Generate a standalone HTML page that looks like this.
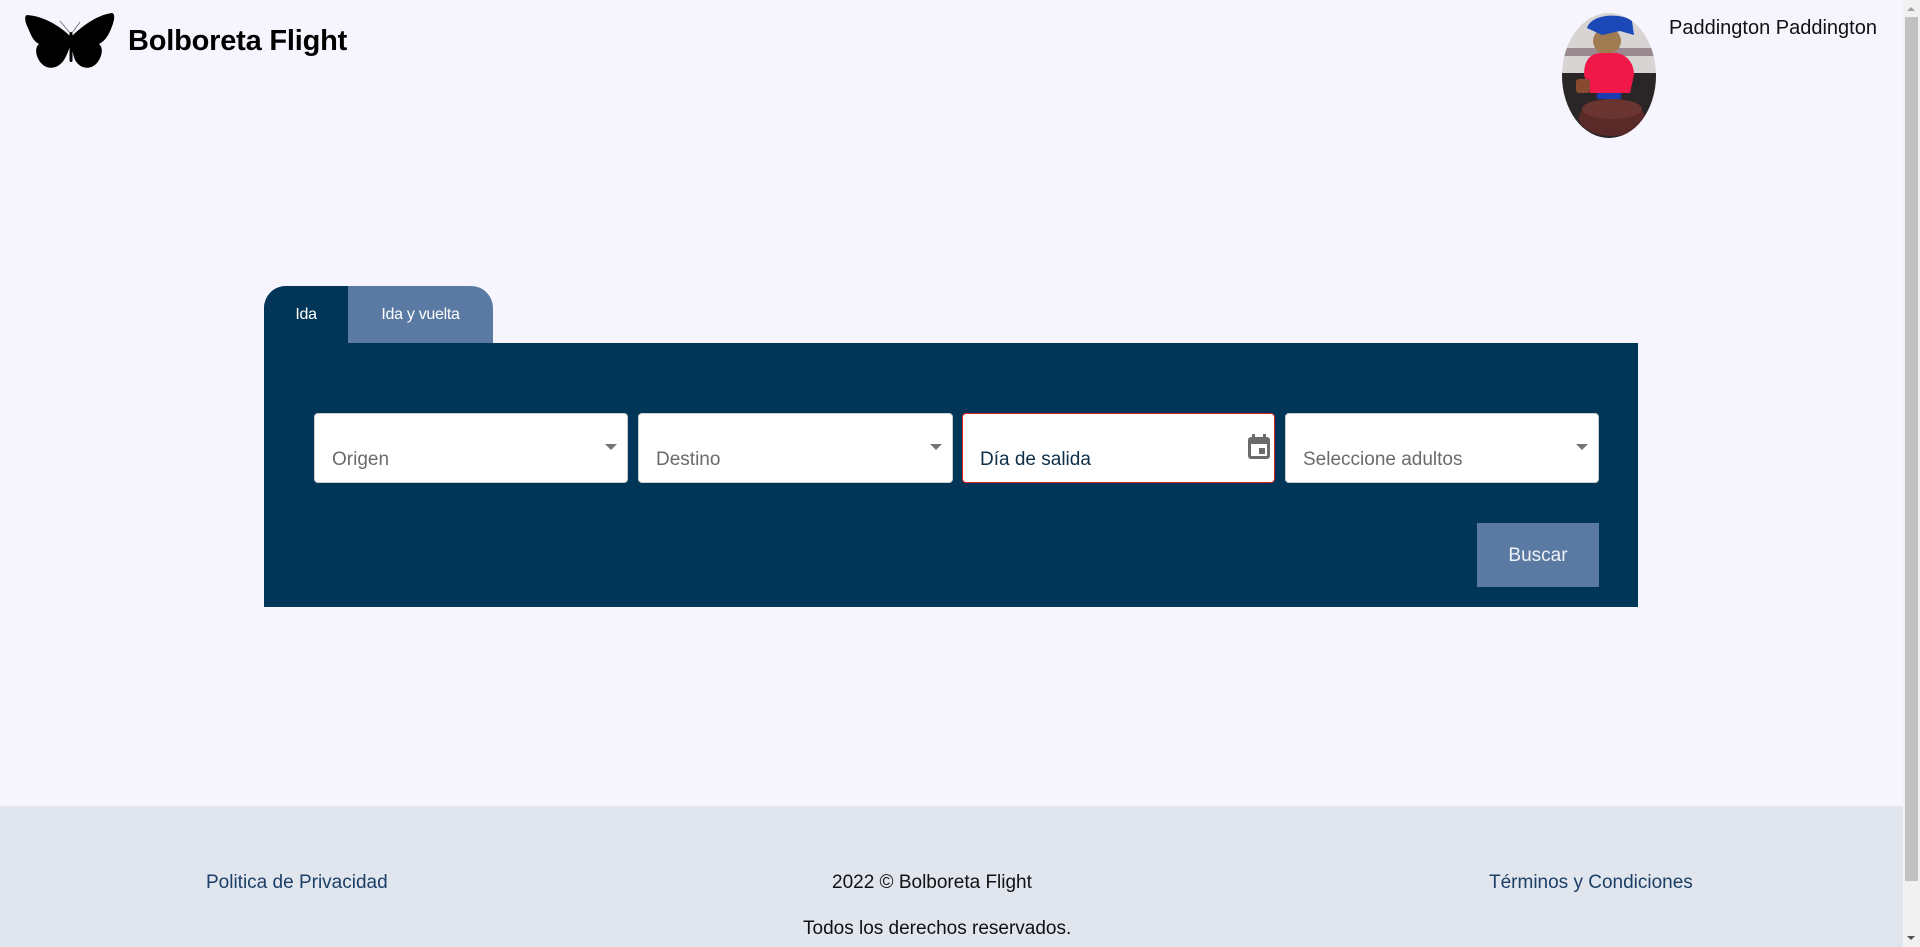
<!DOCTYPE html>
<html><head><meta charset="utf-8">
<style>
*{margin:0;padding:0;box-sizing:border-box}
html,body{width:1920px;height:947px;overflow:hidden;background:#f6f5fd;font-family:"Liberation Sans",sans-serif}
.abs{position:absolute}
.title{left:128px;top:25px;font-size:29px;font-weight:bold;color:#000;letter-spacing:-0.2px}
.name{left:1669px;top:17px;font-size:20px;color:#111}
.tab{top:286px;height:59px;color:#fff;font-size:16px;text-align:center;line-height:58px;letter-spacing:-0.3px}
.panel{left:264px;top:343px;width:1374px;height:264px;background:#023659}
.inp{top:413px;height:70px;background:#fff;border-radius:4px;border:1px solid #ccc}
.inp span{position:absolute;left:17px;top:35px;font-size:19px;color:#6b6b6b}
.arr{position:absolute;right:10px;top:30px;width:0;height:0;border-left:6px solid transparent;border-right:6px solid transparent;border-top:6px solid #757575}
.btn{left:1477px;top:523px;width:122px;height:64px;background:#5b7aa3;color:#eef2f7;font-size:19px;text-align:center;line-height:66px}
.footer{left:0;top:806px;width:1903px;height:141px;background:#e1e5ee}
.ft{font-size:19px;top:872px}
</style></head><body>
<svg class="abs" style="left:0;top:0" width="130" height="80" viewBox="0 0 130 80">
<path d="M70 36 C62 28 45 16 27 15 C24 16 25 22 28 28 C31 35 33 41 39 44 C34 48 36 58 42 64 C48 70 58 69 64 60 C67 55 69 50 70 45 Z" fill="#000"/>
<path d="M72 36 C80 28 96 15 112 13 C116 14 114 22 111 29 C108 36 105 41 99 44 C104 48 102 58 96 64 C90 70 80 69 75 60 C73 55 72 50 72 45 Z" fill="#000"/>
<rect x="69.5" y="32" width="3" height="30" rx="1.5" fill="#000"/>
<path d="M70 33 L60 21 M72 33 L80 22" stroke="#666" stroke-width="0.8" fill="none"/>
</svg>
<div class="abs title">Bolboreta Flight</div>
<svg class="abs" style="left:1562px;top:13px" width="94" height="125" viewBox="0 0 94 125">
<defs><clipPath id="c"><ellipse cx="47" cy="62.5" rx="47" ry="62.5"/></clipPath></defs>
<g clip-path="url(#c)">
<rect width="94" height="125" fill="#d8d4d4"/>
<rect y="60" width="94" height="65" fill="#2a2526"/>
<rect x="0" y="35" width="94" height="8" fill="#9a8a90"/>
<ellipse cx="45" cy="28" rx="14" ry="13" fill="#a07a50"/>
<path d="M25 15 C30 0 60 0 70 8 L72 22 L58 18 L40 22 Z" fill="#1a48b8"/>
<path d="M22 62 C22 45 30 40 40 40 L55 40 C65 42 72 50 72 62 L68 80 L28 80 Z" fill="#f01848"/>
<rect x="35" y="80" width="24" height="6" fill="#1a3cb0"/>
<rect x="14" y="66" width="14" height="14" rx="3" fill="#8a4a30"/>
<ellipse cx="50" cy="105" rx="33" ry="18" fill="#5a2a28"/>
<ellipse cx="50" cy="96" rx="30" ry="10" fill="#6a3530"/>
</g></svg>
<div class="abs name">Paddington Paddington</div>

<div class="abs" style="left:264px;top:286px;width:229px;height:60px;background:#5b7aa3;border-radius:22px 22px 0 0"></div>
<div class="abs" style="left:264px;top:286px;width:84px;height:60px;background:#023659;border-radius:22px 0 0 0"></div>
<div class="abs tab" style="left:264px;width:84px;">Ida</div>
<div class="abs tab" style="left:348px;width:145px;">Ida y vuelta</div>
<div class="abs panel"></div>
<div class="abs inp" style="left:314px;width:314px"><span>Origen</span><i class="arr"></i></div>
<div class="abs inp" style="left:638px;width:315px"><span>Destino</span><i class="arr"></i></div>
<div class="abs inp" style="left:962px;width:313px;border:1px solid #e02020"><span style="color:#0e2f4a">Día de salida</span>
<svg style="position:absolute;left:283px;top:19px" width="26" height="28" viewBox="0 0 26 28"><rect x="6" y="1" width="3" height="5" fill="#6b6b6b"/><rect x="17" y="1" width="3" height="5" fill="#6b6b6b"/><rect x="2" y="4" width="22" height="22" rx="3" fill="#6b6b6b"/><rect x="5" y="11" width="16" height="12" fill="#fff"/><rect x="13" y="15" width="6" height="6" fill="#6b6b6b"/></svg></div>
<div class="abs inp" style="left:1285px;width:314px"><span>Seleccione adultos</span><i class="arr"></i></div>
<div class="abs btn">Buscar</div>

<div class="abs footer"></div>
<div class="abs ft" style="left:206px;color:#1b3f66">Politica de Privacidad</div>
<div class="abs ft" style="left:832px;color:#111">2022 © Bolboreta Flight</div>
<div class="abs ft" style="left:803px;top:918px;color:#111">Todos los derechos reservados.</div>
<div class="abs ft" style="left:1489px;color:#1b3f66">Términos y Condiciones</div>

<div class="abs" style="left:1903px;top:0;width:17px;height:947px;background:#f1f1f1"></div>
<div class="abs" style="left:1905px;top:17px;width:13px;height:864px;background:#c1c1c1"></div>
<div class="abs" style="left:1907px;top:7px;width:0;height:0;border-left:4px solid transparent;border-right:4px solid transparent;border-bottom:4px solid #a3a3a3"></div>
<div class="abs" style="left:1907px;top:936px;width:0;height:0;border-left:4px solid transparent;border-right:4px solid transparent;border-top:4px solid #505050"></div>
</body></html>
